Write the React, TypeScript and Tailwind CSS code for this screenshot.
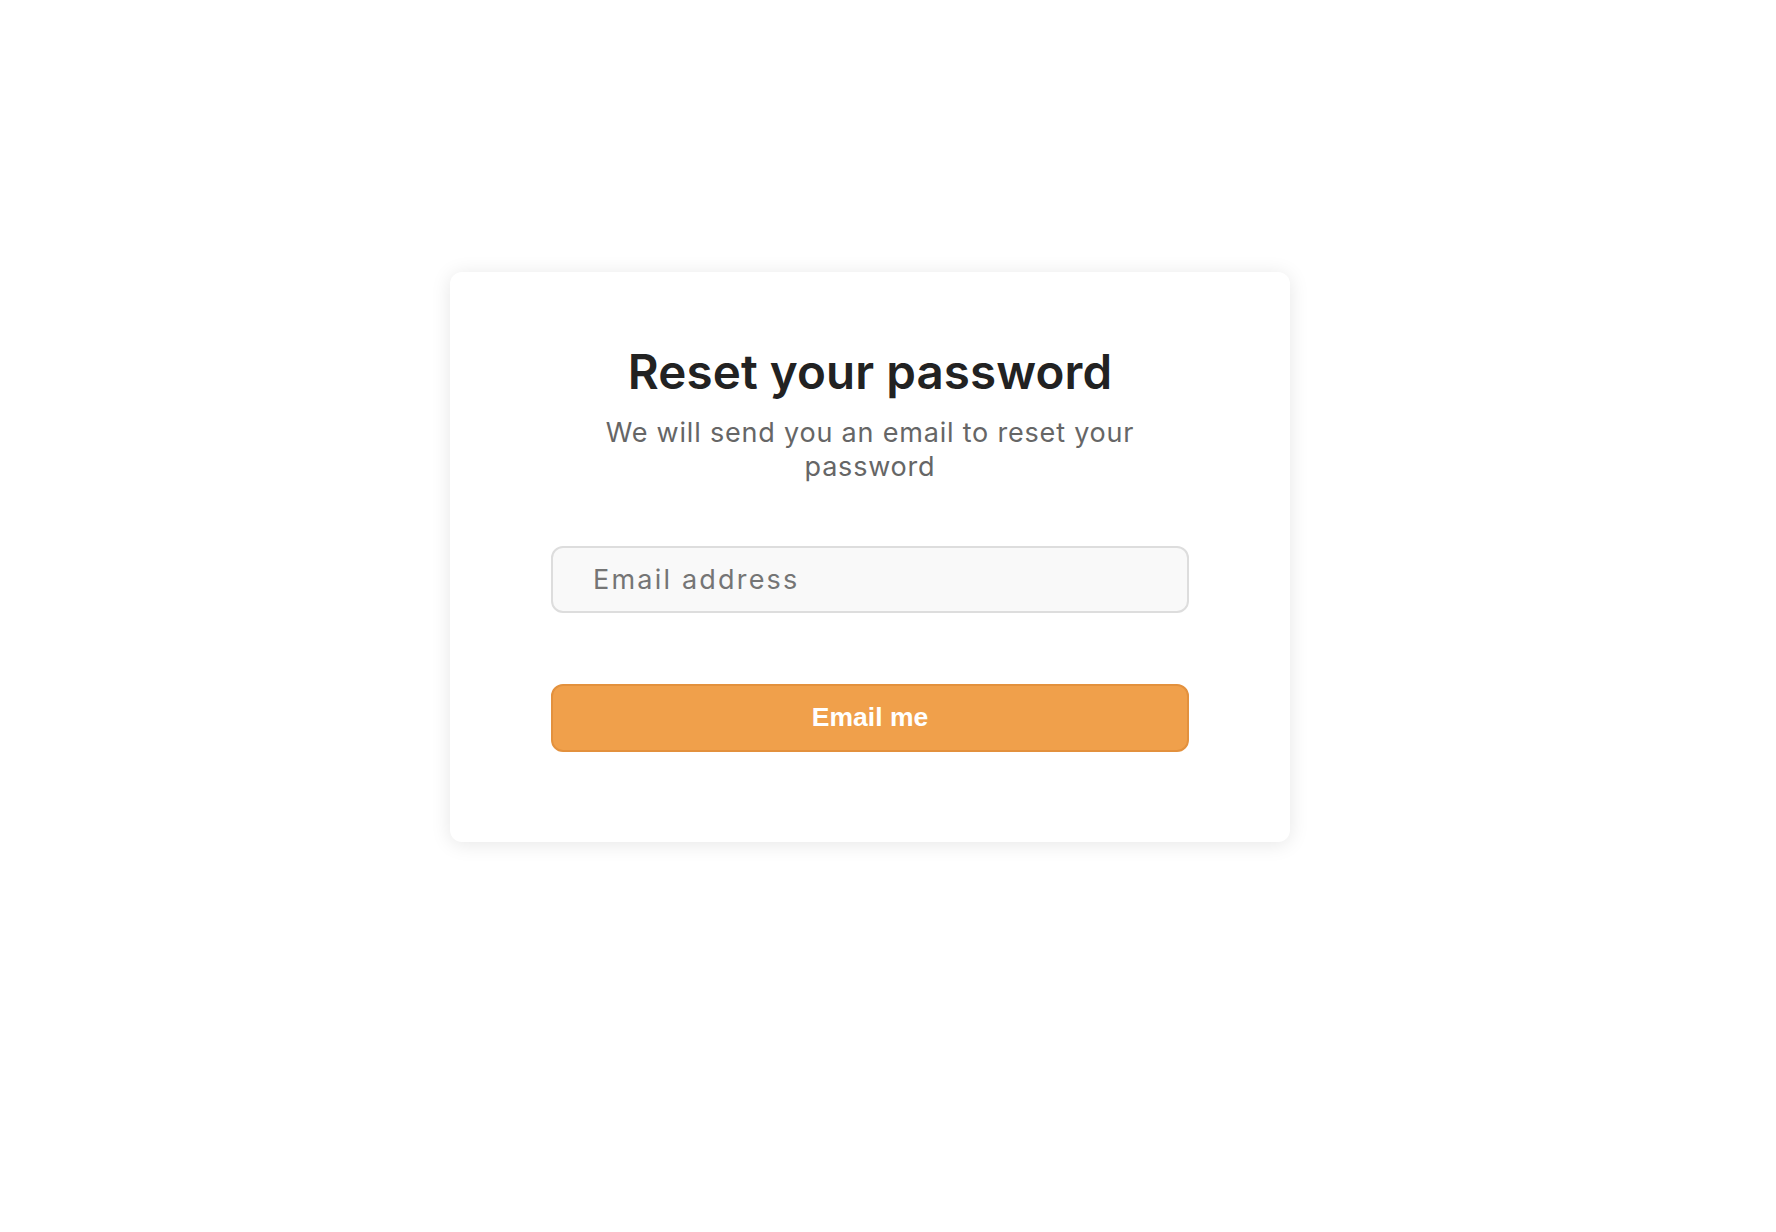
import React from "react";

export default function App() {
  return (
    <div className="min-h-screen bg-white pl-[450px] pt-[272px]">
      <div className="w-[840px] h-[570px] rounded-[12px] bg-white shadow-[0_2px_20px_rgba(0,0,0,0.1)] flex flex-col items-center pt-[72px] px-[101px]" style={{ fontFamily: "Inter, 'Noto Sans', sans-serif" }}>
        <h1 className="text-[47.5px] leading-[56px] font-semibold text-[#222222] tracking-[0.1px]">Reset your password</h1>
        <p className="mt-[16px] w-[560px] text-center text-[27px] leading-[34px] text-[#666666] tracking-[0.8px]">
          We will send you an email to reset your password
        </p>
        <input
          type="email"
          placeholder="Email address"
          className="mt-[62px] w-full h-[67px] rounded-[12px] border-2 border-[#dddddd] bg-[#f9f9f9] pl-[40px] text-[27px] tracking-[2.2px] text-[#333] placeholder:text-[#757575] outline-none"
        />
        <button className="mt-[71px] w-full h-[68px] rounded-[12px] border-2 border-[#e3913d] bg-[#f0a04b] text-white text-[26.5px] font-bold" style={{ fontFamily: "'Liberation Sans', Arial, sans-serif" }}>
          Email me
        </button>
      </div>
    </div>
  );
}
